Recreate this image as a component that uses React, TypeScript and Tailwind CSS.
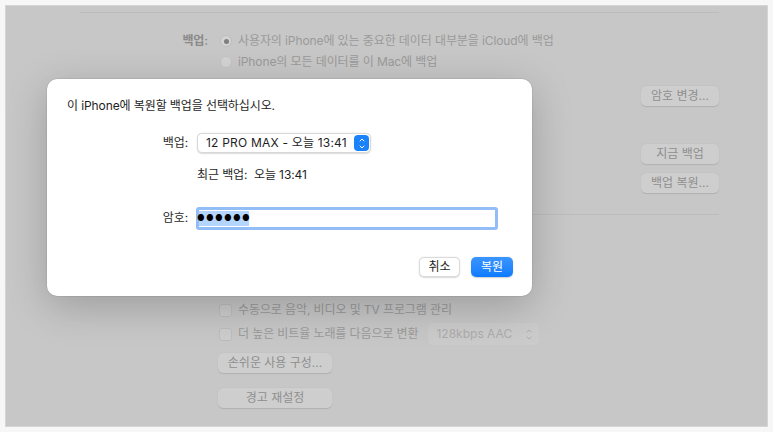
import { ChevronDown, ChevronUp } from 'lucide-react';

const font = { fontFamily: '"Inter", "Noto Sans CJK KR", sans-serif' };

const BgButton = ({ label, className = '' }: { label: string; className?: string }) => (
	<div
		className={`h-[20px] flex items-center justify-center rounded-[5px] bg-[#cecece] shadow-[0_0.5px_1px_rgba(0,0,0,0.12)] text-[12px] text-[#8e8e8e] ${className}`}
	>
		{label}
	</div>
);

const Checkbox = () => (
	<div className="size-[13px] rounded-[3px] bg-[#cdcdcd] border border-[#bdbdbd] shrink-0" />
);

const CheckRow = ({ label, children }: { label: string; children?: React.ReactNode }) => (
	<div className="h-[24px] flex items-center pl-[139px] gap-[6px]">
		<Checkbox />
		<span className="text-[12px] text-[#9a9a9a] tracking-[-0.1px]">{label}</span>
		{children}
	</div>
);

const Dialog = () => (
	<div className="absolute left-[41px] top-[73px] w-[485px] h-[217px] bg-white rounded-[10px] shadow-[0_10px_40px_rgba(0,0,0,0.22),0_0_0_0.5px_rgba(0,0,0,0.12)] flex flex-col pl-[20px] pr-[19px] pt-[18px]">
		<p className="text-[12px] text-[#1e1e1e] h-[18px] leading-[18px] tracking-[-0.1px]">
			이 iPhone에 복원할 백업을 선택하십시오.
		</p>
		<div className="mt-[18px] flex items-center h-[20px]">
			<span className="w-[121px] text-right text-[12px] text-[#2a2a2a] tracking-[-0.1px]">백업:</span>
			<div className="ml-[9px] w-[174px] h-[20px] rounded-[5px] bg-white border border-[#d8d8d8] shadow-[0_0.5px_1.5px_rgba(0,0,0,0.15)] flex items-center pl-[8px] pr-[1px]">
				<span className="flex-1 text-[12px] text-[#1e1e1e] tracking-[0.2px]">12 PRO MAX - 오늘 13:41</span>
				<div className="w-[15px] h-[16px] rounded-[4px] bg-[#1a82fb] flex flex-col items-center justify-center">
					<ChevronUp className="size-[8px] text-white -mb-[1px]" strokeWidth={3} />
					<ChevronDown className="size-[8px] text-white" strokeWidth={3} />
				</div>
			</div>
		</div>
		<div className="mt-[12px] h-[20px] flex items-center pl-[130px] text-[12px] text-[#1e1e1e] tracking-[-0.1px]">
			최근 백업:&nbsp;&nbsp;오늘 13:41
		</div>
		<div className="mt-[22px] flex items-center h-[22px]">
			<span className="w-[121px] text-right text-[12px] text-[#2a2a2a] tracking-[-0.1px]">암호:</span>
			<div className="ml-[8px] w-[302px] h-[23px] rounded-[3px] border-[3px] border-[#93bdf7] bg-white flex items-center">
				<span className="bg-[#b4d5fe] h-[15px] w-[50px] flex items-center justify-center text-[8.5px] tracking-[1.2px] text-black">●●●●●●</span>
			</div>
		</div>
		<div className="mt-[28px] flex justify-end gap-[11px]">
			<div className="w-[41px] h-[20px] rounded-[5px] bg-white border border-[#dadada] shadow-[0_0.5px_1.5px_rgba(0,0,0,0.15)] flex items-center justify-center text-[12px] text-[#1e1e1e]">
				취소
			</div>
			<div className="w-[42px] h-[20px] rounded-[5px] bg-gradient-to-b from-[#3a95ff] to-[#0a7bff] shadow-[0_0.5px_1.5px_rgba(0,0,0,0.2)] flex items-center justify-center text-[12px] text-white">
				복원
			</div>
		</div>
	</div>
);

export default function App() {
	return (
		<div className="w-[773px] h-[432px] bg-[#f7f7f7] pt-[5px] pl-[5px]" style={font}>
			<div className="relative w-[763px] h-[422px] bg-[#c7c7c7] border border-[#d5d5d5] overflow-hidden">
				<div className="ml-[74px] w-[639px] flex flex-col pt-[6px]">
					<div className="h-px bg-[#bcbcbc]" />
					<div className="mt-[18px] h-[20px] flex items-center">
						<span className="w-[128px] text-right text-[12px] font-semibold text-[#8a8a8a] tracking-[-0.1px]">백업:</span>
						<div className="ml-[12px] size-[12px] rounded-full bg-[#d3d3d3] border border-[#bdbdbd] flex items-center justify-center">
							<div className="size-[5px] rounded-full bg-[#7f7f7f]" />
						</div>
						<span className="ml-[6px] text-[12px] text-[#9a9a9a] tracking-[-0.1px]">
							사용자의 iPhone에 있는 중요한 데이터 대부분을 iCloud에 백업
						</span>
					</div>
					<div className="h-[21px] flex items-center pl-[140px]">
						<div className="size-[12px] rounded-full bg-[#d3d3d3] border border-[#c4c4c4]" />
						<span className="ml-[6px] text-[12px] text-[#9a9a9a] tracking-[-0.1px]">
							iPhone의 모든 데이터를 이 Mac에 백업
						</span>
					</div>
					<div className="flex flex-col items-end">
						<BgButton label="암호 변경..." className="mt-[14px] w-[78px]" />
						<BgButton label="지금 백업" className="mt-[38px] w-[78px]" />
						<BgButton label="백업 복원..." className="mt-[9px] w-[78px]" />
					</div>
					<div className="mt-[21px] h-px bg-[#bcbcbc]" />
					{/* rows fully covered by the dialog are left as blank space */}
					<div className="mt-[11px] flex flex-col">
						<div className="h-[48px]" />
						<CheckRow label="SD 비디오보다 HD 비디오 선호" />
						<CheckRow label="수동으로 음악, 비디오 및 TV 프로그램 관리" />
						<CheckRow label="더 높은 비트율 노래를 다음으로 변환">
							<div className="ml-[4px] w-[111px] h-[22px] rounded-[5px] bg-[#cbcbcb] flex items-center pl-[8px] pr-[6px]">
								<span className="flex-1 text-[12px] text-[#acacac]">128kbps AAC</span>
								<div className="flex flex-col items-center text-[#a8a8a8]">
									<ChevronUp className="size-[8px] -mb-[1px]" strokeWidth={2.5} />
									<ChevronDown className="size-[8px]" strokeWidth={2.5} />
								</div>
							</div>
						</CheckRow>
					</div>
					<div className="pl-[138px] flex flex-col">
						<BgButton label="손쉬운 사용 구성..." className="mt-[7px] w-[114px]" />
						<BgButton label="경고 재설정" className="mt-[15px] w-[114px]" />
					</div>
				</div>
				<Dialog />
			</div>
		</div>
	);
}
